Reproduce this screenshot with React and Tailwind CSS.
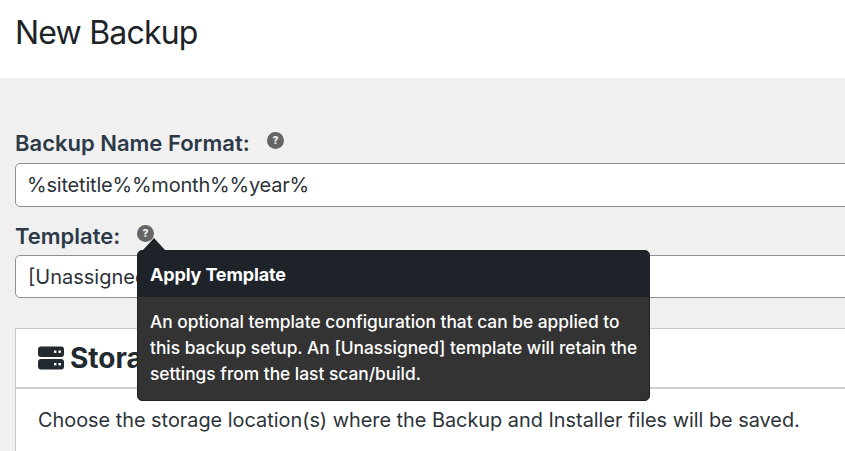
import React from 'react';

const HelpIcon = () => (
  <svg width="17" height="17" viewBox="0 0 17 17" className="block">
    <circle cx="8.5" cy="8.5" r="8.5" fill="#656565" />
    <text x="8.5" y="12" textAnchor="middle" fontSize="10.5" fontWeight="800" fill="#f0f0f1" fontFamily="Inter, sans-serif">?</text>
  </svg>
);

const ServerIcon = () => (
  <svg width="26" height="24" viewBox="0 0 26 24" className="block">
    <rect x="0" y="0.5" width="26" height="10.5" rx="3" fill="#22292f" />
    <rect x="0" y="13" width="26" height="10.5" rx="3" fill="#22292f" />
    <rect x="16" y="4.5" width="2.4" height="2.4" fill="#fff" />
    <rect x="20.5" y="4.5" width="2.4" height="2.4" fill="#fff" />
    <rect x="16" y="17" width="2.4" height="2.4" fill="#fff" />
    <rect x="20.5" y="17" width="2.4" height="2.4" fill="#fff" />
  </svg>
);

const App = () => {
  return (
    <div className="relative h-[451px] w-[845px] overflow-hidden bg-[#f0f0f1] font-['Inter',sans-serif] text-[#22292f]">
      <div className="flex h-[78px] items-start bg-white pl-[15px] pt-[13px]">
        <h1 className="text-[32px] leading-[40px] font-normal tracking-[-0.8px] text-[#1d2327]">New Backup</h1>
      </div>

      <div className="w-[900px] pl-[15px] pt-[53px]">
        <div className="flex h-[24px] items-center gap-[17px]">
          <label className="text-[22px] font-semibold leading-[26px] text-[#2c3a47]">Backup Name Format:</label>
          <span className="-mt-[5px]"><HelpIcon /></span>
        </div>
        <div className="mt-[8px] flex h-[44px] items-center rounded-[5px] border border-[#8c8f94] bg-white pl-[11px] text-[20px] tracking-[-0.2px] text-[#2c3338]">
          %sitetitle%%month%%year%
        </div>

        <div className="mt-[17px] flex h-[24px] items-center gap-[17px]">
          <label className="text-[22px] font-semibold leading-[26px] text-[#2c3a47]">Template:</label>
          <span className="-mt-[5px]"><HelpIcon /></span>
        </div>
        <div className="mt-[7px] flex h-[43px] items-center rounded-[5px] border border-[#8c8f94] bg-white pl-[12px] text-[20px] text-[#2c3338]">
          [Unassigned]
        </div>

        <div className="mt-[30px] h-[200px] border border-[#c9c9c9] bg-white">
          <div className="flex h-[60px] items-center gap-[6px] border-b-2 border-[#d0d0d0] pl-[22px]">
            <ServerIcon />
            <span className="text-[28px] font-bold text-[#22292f]">Storage</span>
          </div>
          <p className="pl-[22px] pt-[17px] text-[19.87px] leading-[28px] text-[#2c3338]">
            Choose the storage location(s) where the Backup and Installer files will be saved.
          </p>
        </div>
      </div>

      <div className="absolute left-[143px] top-[238px] h-0 w-0 border-x-[11px] border-b-[12px] border-x-transparent border-b-[#1e2329]" />
      <div className="absolute left-[137px] top-[250px] w-[513px] overflow-hidden rounded-[5px] border border-[#1e2329] bg-[#333333] text-white">
        <div className="flex h-[46px] items-center bg-[#1e2329] pl-[12px] text-[18px] font-bold tracking-[-0.15px]">Apply Template</div>
        <p className="pb-[13px] pl-[12px] pr-[6px] pt-[12px] text-[17.33px] font-medium leading-[26px]">
          An optional template configuration that can be applied to this backup setup. An [Unassigned] template will retain the settings from the last scan/build.
        </p>
      </div>
    </div>
  );
};

export default App;
